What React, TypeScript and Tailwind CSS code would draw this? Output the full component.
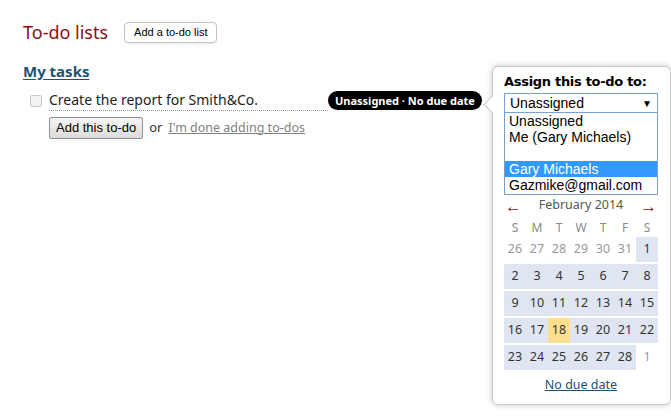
import React from 'react'

const weeks: { d: number; other?: boolean; today?: boolean }[][] = [
  [{ d: 26, other: true }, { d: 27, other: true }, { d: 28, other: true }, { d: 29, other: true }, { d: 30, other: true }, { d: 31, other: true }, { d: 1 }],
  [{ d: 2 }, { d: 3 }, { d: 4 }, { d: 5 }, { d: 6 }, { d: 7 }, { d: 8 }],
  [{ d: 9 }, { d: 10 }, { d: 11 }, { d: 12 }, { d: 13 }, { d: 14 }, { d: 15 }],
  [{ d: 16 }, { d: 17 }, { d: 18, today: true }, { d: 19 }, { d: 20 }, { d: 21 }, { d: 22 }],
  [{ d: 23 }, { d: 24 }, { d: 25 }, { d: 26 }, { d: 27 }, { d: 28 }, { d: 1, other: true }],
]

const people = ['Unassigned', 'Me (Gary Michaels)', '', 'Gary Michaels', 'Gazmike@gmail.com']

export default function App() {
  return (
    <div className="relative w-[671px] h-[416px] bg-white overflow-hidden font-['Noto_Sans',sans-serif] text-[#333]">
      <div className="pl-[23px] pt-[20px]">
        <div className="flex items-center gap-[16px]">
          <h1 className="text-[18px] leading-6 text-[#8a0f0f]">To-do lists</h1>
          <button className="h-[21px] px-[9px] rounded-[4px] border border-[#c4c4c4] bg-white text-[11px] text-black font-['Liberation_Sans',sans-serif] shadow-[0_1px_1px_rgba(0,0,0,0.08)]">
            Add a to-do list
          </button>
        </div>

        <h2 className="mt-[17px] text-[15px] leading-5 font-bold text-[#1d5272] underline underline-offset-2">My tasks</h2>

        <div className="mt-[10px] flex items-start">
          <span className="mt-[4px] ml-[7px] w-[12px] h-[12px] rounded-[2px] border border-[#c8c8c8] bg-[#f2f2f2]" />
          <div className="ml-[7px]">
            <div className="flex items-center">
              <div className="w-[279px] border-b border-dotted border-[#9a9a9a] pb-[1px] text-[14px] leading-[18px] text-[#222]">
                Create the report for Smith&amp;Co.
              </div>
              <span className="-mt-[2px] h-[19px] px-[7px] rounded-full bg-black text-white text-[11px] font-bold leading-[19px] whitespace-nowrap">
                Unassigned · No due date
              </span>
            </div>
            <div className="mt-[6px] flex items-center gap-[6px] text-[13px]">
              <button className="h-[22px] px-[6px] border border-[#8f8f8f] rounded-[2px] bg-gradient-to-b from-[#f6f6f6] to-[#dcdcdc] text-[13px] text-black font-['Liberation_Sans',sans-serif]">
                Add this to-do
              </button>
              <span className="text-[#333]">or</span>
              <a className="text-[12.5px] text-[#808080] underline">I'm done adding to-dos</a>
            </div>
          </div>
        </div>
      </div>

      <div className="absolute left-[492px] top-[66px] w-[179px] h-[339px] bg-white border border-[#c9c9c9] rounded-[6px] shadow-[0_0_6px_rgba(0,0,0,0.22)]">
        <span className="absolute -left-[7px] top-[31px] w-[13px] h-[13px] rotate-45 bg-white border-l border-b border-[#c9c9c9]" />
        <div className="relative px-[11px] pt-[6px]">
          <div className="text-[13px] font-bold text-black font-['DejaVu_Sans',sans-serif] tracking-[-0.3px] leading-[18px]">Assign this to-do to:</div>
          <div className="mt-[2px] w-[154px] font-['Liberation_Sans',sans-serif] text-[14px]">
            <div className="h-[20px] flex items-center justify-between pl-[5px] pr-[5px] border border-[#7aa0d6] text-black">
              <span>Unassigned</span>
              <span className="text-[10px]">▼</span>
            </div>
            <ul className="border border-t-0 border-[#7f9db9] text-black leading-[16px]">
              {people.map((p, i) => (
                <li key={i} className={`h-[16px] pl-[4px] ${i === 3 ? 'bg-[#3399ff] text-white' : ''} ${i === 4 ? 'h-[17px]' : ''}`}>{p}</li>
              ))}
            </ul>
          </div>

          <div className="w-[154px] flex items-center justify-between px-[1px] h-[20px]">
            <span className="text-[#7a1f1f] text-[17px] leading-none">←</span>
            <span className="text-[12.5px] text-[#555]">February 2014</span>
            <span className="text-[#7a1f1f] text-[17px] leading-none">→</span>
          </div>

          <div className="w-[154px] mt-[3px]">
            <div className="grid grid-cols-7 h-[19px] items-center text-center text-[12px] text-[#8a8a8a]">
              {['S', 'M', 'T', 'W', 'T', 'F', 'S'].map((d, i) => <span key={i}>{d}</span>)}
            </div>
            <div className="flex flex-col gap-[2px]">
              {weeks.map((w, i) => (
                <div key={i} className="grid grid-cols-7 h-[25px] text-[12.5px]">
                  {w.map((c, j) => (
                    <span
                      key={j}
                      className={`flex items-center justify-center ${c.other ? 'text-[#999]' : 'text-[#333]'} ${c.today ? 'bg-[#ffdf8e]' : c.other ? '' : 'bg-[#dfe6f2]'}`}
                    >
                      {c.d}
                    </span>
                  ))}
                </div>
              ))}
            </div>
          </div>

          <div className="w-[154px] mt-[4px] text-center leading-[18px]">
            <a className="text-[12.5px] text-[#1d5272] underline">No due date</a>
          </div>
        </div>
      </div>
    </div>
  )
}
